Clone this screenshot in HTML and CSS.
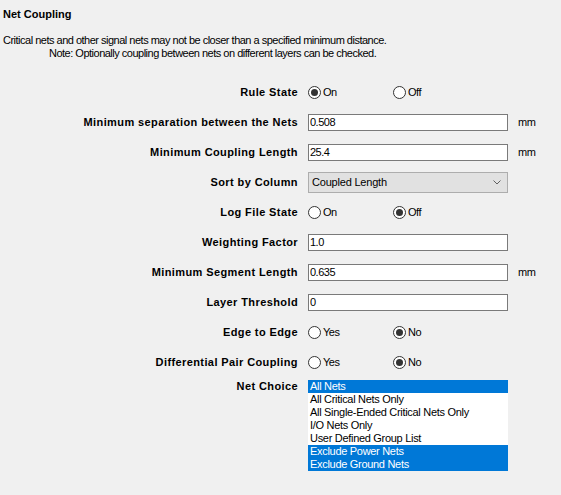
FILE: index.html
```html
<!DOCTYPE html>
<html lang="en">
<head>
  <meta charset="UTF-8">
  <title>Net Coupling</title>
  <link rel="stylesheet" href="styles.css">
</head>
<body>
  <div class="panel">
    <h1 class="title">Net Coupling</h1>
    <p class="desc">
      <span>Critical nets and other signal nets may not be closer than a specified minimum distance.</span>
      <span class="note">Note: Optionally coupling between nets on different layers can be checked.</span>
    </p>

    <div class="form">
      <label class="lbl">Rule State</label>
      <div class="ctl">
        <label class="radio"><input type="radio" name="rule" checked>On</label>
        <label class="radio"><input type="radio" name="rule">Off</label>
      </div>

      <label class="lbl">Minimum separation between the Nets</label>
      <div class="ctl"><input class="txt" type="text" value="0.508"><span class="unit">mm</span></div>

      <label class="lbl">Minimum Coupling Length</label>
      <div class="ctl"><input class="txt" type="text" value="25.4"><span class="unit">mm</span></div>

      <label class="lbl">Sort by Column</label>
      <div class="ctl">
        <div class="combo">
          <span>Coupled Length</span>
          <svg width="8" height="5" viewBox="0 0 8 5"><path d="M0.5 0.5 L4 4 L7.5 0.5" fill="none" stroke="#606060" stroke-width="1"/></svg>
        </div>
      </div>

      <label class="lbl">Log File State</label>
      <div class="ctl">
        <label class="radio"><input type="radio" name="log">On</label>
        <label class="radio"><input type="radio" name="log" checked>Off</label>
      </div>

      <label class="lbl">Weighting Factor</label>
      <div class="ctl"><input class="txt" type="text" value="1.0"></div>

      <label class="lbl">Minimum Segment Length</label>
      <div class="ctl"><input class="txt" type="text" value="0.635"><span class="unit">mm</span></div>

      <label class="lbl">Layer Threshold</label>
      <div class="ctl"><input class="txt" type="text" value="0"></div>

      <label class="lbl">Edge to Edge</label>
      <div class="ctl">
        <label class="radio"><input type="radio" name="edge">Yes</label>
        <label class="radio"><input type="radio" name="edge" checked>No</label>
      </div>

      <label class="lbl">Differential Pair Coupling</label>
      <div class="ctl">
        <label class="radio"><input type="radio" name="diff">Yes</label>
        <label class="radio"><input type="radio" name="diff" checked>No</label>
      </div>

      <label class="lbl top">Net Choice</label>
      <div class="ctl top">
        <ul class="listbox">
          <li class="sel">All Nets</li>
          <li>All Critical Nets Only</li>
          <li>All Single-Ended Critical Nets Only</li>
          <li>I/O Nets Only</li>
          <li>User Defined Group List</li>
          <li class="sel">Exclude Power Nets</li>
          <li class="sel">Exclude Ground Nets</li>
        </ul>
      </div>
    </div>
  </div>
</body>
</html>
```

FILE: styles.css
```css
body {
  margin: 0;
  background-color: #f0f0f0;
  color: #000;
  font-family: "Liberation Sans", Arial, sans-serif;
  font-size: 11px;
  letter-spacing: -0.5px;
}
.panel {
  padding: 8px 3px 0 3px;
}
.title {
  margin: 0;
  font-size: 11px;
  font-weight: bold;
  line-height: 13px;
  letter-spacing: 0;
}
.desc {
  margin: 13px 0 0 0;
  line-height: 13px;
}
.desc span {
  display: block;
}
.desc .note {
  padding-left: 46px;
}
.form {
  display: grid;
  grid-template-columns: 295px 1fr;
  grid-template-rows: repeat(10, 30px) auto;
  column-gap: 10px;
  align-items: center;
  margin-top: 17px;
}
.lbl {
  font-weight: bold;
  text-align: right;
  white-space: nowrap;
  letter-spacing: 0.4px;
}
.lbl.top {
  align-self: start;
  padding-top: 3px;
}
.ctl {
  display: flex;
  align-items: center;
}
.ctl.top {
  align-self: start;
  padding-top: 3px;
}
.radio {
  display: flex;
  align-items: center;
  width: 85px;
}
.radio input {
  appearance: none;
  -webkit-appearance: none;
  width: 13px;
  height: 13px;
  margin: 0 2px 0 0;
  border: 1px solid #333;
  border-radius: 50%;
  background: #fff;
  display: grid;
  place-content: center;
}
.radio input:checked::before {
  content: "";
  width: 7px;
  height: 7px;
  border-radius: 50%;
  background: #333;
}
.txt {
  box-sizing: border-box;
  width: 200px;
  height: 17px;
  margin: 0;
  padding: 0 1px;
  border: 1px solid #7a7a7a;
  background: #fff;
  font: inherit;
  letter-spacing: inherit;
  color: #000;
  outline: none;
}
.unit {
  margin-left: 10px;
}
.combo {
  box-sizing: border-box;
  width: 200px;
  height: 21px;
  padding: 0 6px 0 3px;
  border: 1px solid #adadad;
  background: #e1e1e1;
  letter-spacing: -0.2px;
  display: flex;
  align-items: center;
  justify-content: space-between;
}
.listbox {
  list-style: none;
  margin: 0;
  padding: 0;
  width: 200px;
  background: #fff;
  letter-spacing: -0.3px;
}
.listbox li {
  height: 13px;
  line-height: 13px;
  padding-left: 2px;
  white-space: nowrap;
}
.listbox li.sel {
  background: #0078d7;
  color: #fff;
}
```
